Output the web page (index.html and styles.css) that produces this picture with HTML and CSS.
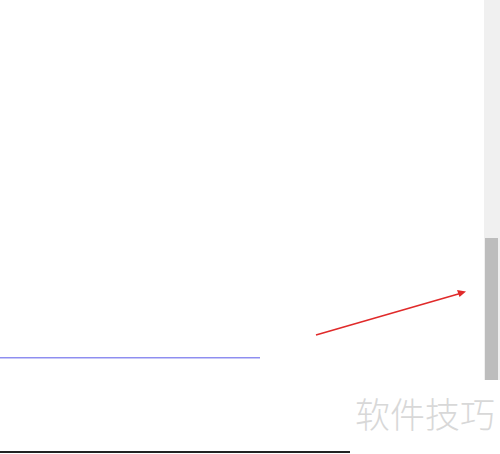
FILE: index.html
```html
<!DOCTYPE html>
<html>
<head>
<meta charset="utf-8">
<link rel="stylesheet" href="styles.css">
</head>
<body>
<div class="page">
  <div class="view">
    <div class="content"><div class="link-line"></div></div>
    <div class="scrollbar"><div class="thumb"></div></div>
  </div>
  <div class="footer">
    <div class="watermark">软件技巧</div>
    <div class="rule"></div>
  </div>
  <svg class="arrow" width="500" height="454" viewBox="0 0 500 454">
    <line x1="316" y1="335" x2="460" y2="293.5" stroke="#e02a2a" stroke-width="1.6"/>
    <polygon points="466,291.5 457,290 459.5,297" fill="#e02a2a"/>
  </svg>
</div>
</body>
</html>
```
FILE: styles.css
```css
html, body {
  margin: 0;
  padding: 0;
  background: #ffffff;
}
.page {
  position: relative;
  width: 500px;
  height: 454px;
  overflow: hidden;
  font-family: "Noto Sans CJK SC", "Noto Sans", sans-serif;
}
.view {
  display: flex;
  height: 380px;
}
.content {
  flex: 1;
  padding-top: 357px;
}
.link-line {
  width: 260px;
  height: 1px;
  background: #8e8ef0;
  border-bottom: 1px solid #c8c8f8;
}
.scrollbar {
  width: 16px;
  background: #f0f0f0;
  display: flex;
  flex-direction: column;
  justify-content: flex-end;
}
.thumb {
  height: 142px;
  margin: 0 2px 0 1px;
  background: #bdbdbd;
}
.footer {
  height: 74px;
  display: flex;
  flex-direction: column;
}
.watermark {
  margin-top: 13px;
  text-align: right;
  padding-right: 5px;
  font-size: 35px;
  line-height: 40px;
  font-weight: 300;
  color: #d8d8d8;
}
.rule {
  margin-top: auto;
  margin-bottom: 1px;
  width: 350px;
  height: 2px;
  background: #222222;
}
.arrow {
  position: absolute;
  left: 0;
  top: 0;
  pointer-events: none;
}
```
